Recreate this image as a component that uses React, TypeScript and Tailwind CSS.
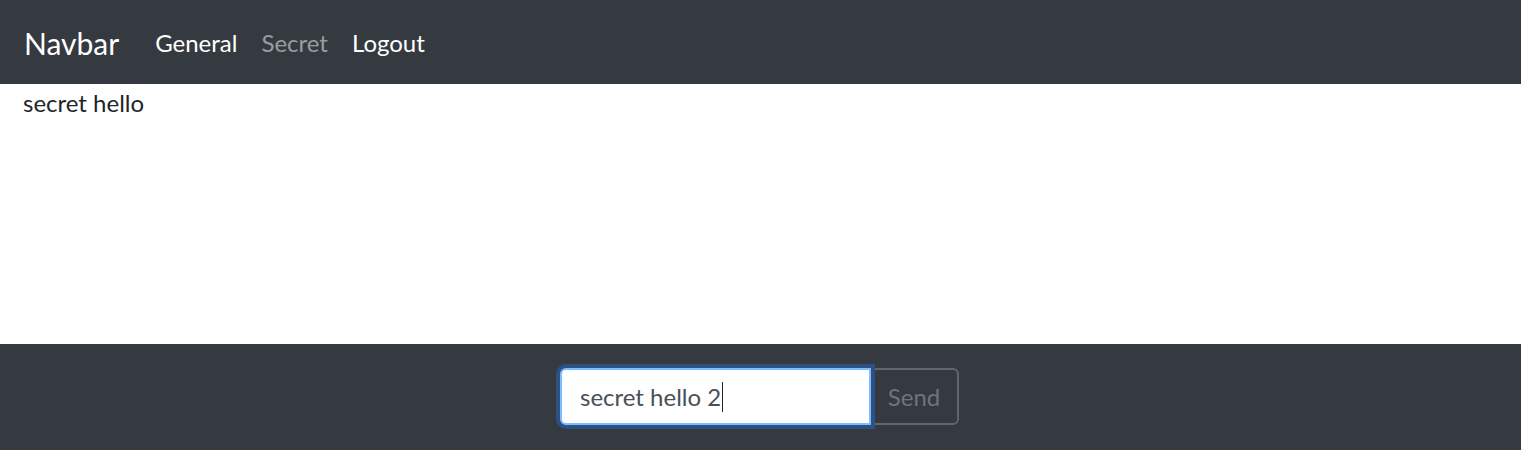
export default function App() {
  return (
    <div className="flex h-[450px] flex-col font-['Lato',sans-serif] text-[24px] leading-[36px] text-[#212529]">
      <nav className="flex h-[84px] items-center bg-[#343a40] px-[24px]">
        <a className="mr-[24px] pt-[2px] text-[30px] leading-[45px] text-white">Navbar</a>
        <ul className="flex pt-[2px]">
          <li>
            <a className="block px-[12px] py-[12px] text-[24px] text-white">General</a>
          </li>
          <li>
            <a className="block px-[12px] py-[12px] text-[24px] text-white/50">Secret</a>
          </li>
          <li>
            <a className="block px-[12px] py-[12px] text-[24px] text-white">Logout</a>
          </li>
        </ul>
      </nav>
      <main className="flex-1 bg-white px-[23px] pt-[1px]">
        <div>secret hello</div>
      </main>
      <footer className="flex h-[106px] justify-center bg-[#343a40] pt-[24px]">
        <div className="flex h-[57px] -translate-x-[1px]">
          <div className="relative z-10 flex w-[311px] items-center rounded-l-[6px] border-[2px] border-[#80bdff] bg-white px-[18px] text-[#495057] shadow-[0_0_0_4px_#2b5282]">
            <span>secret hello 2</span>
            <span className="ml-px h-[30px] w-px bg-[#212529]" />
          </div>
          <button
            disabled
            className="-ml-[2px] w-[90px] rounded-r-[6px] border-[2px] border-[#5f666d] text-[24px] text-[#6c757d]"
          >
            Send
          </button>
        </div>
      </footer>
    </div>
  );
}
